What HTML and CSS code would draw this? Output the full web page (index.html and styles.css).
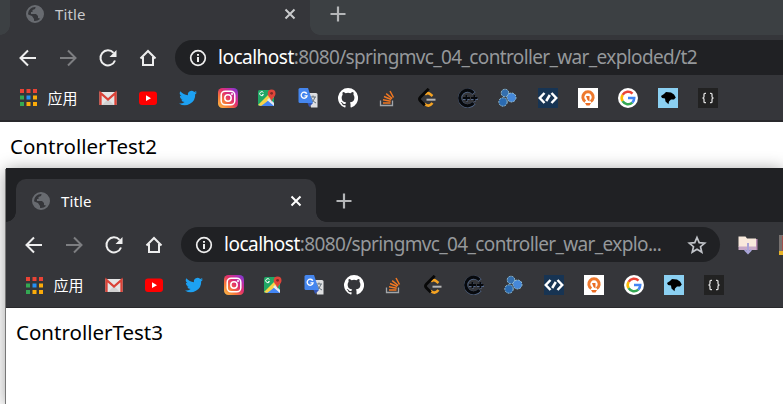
FILE: index.html
```
<!DOCTYPE html>
<html lang="zh">
<head>
<meta charset="utf-8">
<title>Title</title>
<link rel="stylesheet" href="styles.css">
</head>
<body>
<svg class="sprite" aria-hidden="true">
  <defs>
    <linearGradient id="insta-fill" x1="0" y1="1" x2="1" y2="0">
      <stop offset="0" stop-color="#fdc04a"/><stop offset=".3" stop-color="#f77a38"/><stop offset=".55" stop-color="#e1306c"/><stop offset=".8" stop-color="#b22fb4"/><stop offset="1" stop-color="#6440d8"/>
    </linearGradient>
  </defs>
  <symbol id="globe" viewBox="0 0 18 18"><circle cx="9" cy="9" r="8" fill="none" stroke="#686b70" stroke-width="2"/><path d="M10 1 9 4 6.500 5v2H5v2h5l2 2v2l3 1 2-4V6l-3-4ZM1 9l5 2 2 3v3l-4-2-3-4Z" fill="#686b70"/></symbol>
  <symbol id="back" viewBox="0 0 20 20"><path d="M18 10H3M10 2.500 2.500 10l7.500 7.500" fill="none" stroke="currentColor" stroke-width="2"/></symbol>
  <symbol id="reload" viewBox="0 0 20 20"><path d="M17 12.500A7.500 7.500 0 1 1 15.600 4.900" fill="none" stroke="currentColor" stroke-width="2"/><path d="M18.500 2v7h-7Z" fill="currentColor"/></symbol>
  <symbol id="home" viewBox="0 0 20 20"><path d="M2.500 10.500 10 3l7.500 7.500M5 9v8h10V9" fill="none" stroke="currentColor" stroke-width="2"/></symbol>
  <symbol id="info" viewBox="0 0 18 18"><circle cx="9" cy="9" r="7.300" fill="none" stroke="currentColor" stroke-width="1.700"/><path d="M9 8v5M9 5v1.800" stroke="currentColor" stroke-width="2"/></symbol>
  <symbol id="close" viewBox="0 0 12 12"><path d="m1.500 1.500 9 9m0-9-9 9" stroke="currentColor" stroke-width="2"/></symbol>
  <symbol id="plus" viewBox="0 0 16 16"><path d="M8 .5v15M.5 8h15" stroke="currentColor" stroke-width="2.200"/></symbol>
  <symbol id="star" viewBox="0 0 20 20"><path d="m10 2.500 2.200 5.100 5.500.5-4.200 3.600 1.300 5.400-4.800-2.900-4.800 2.900 1.300-5.400-4.200-3.600 5.500-.5Z" fill="none" stroke="#c1c4c9" stroke-width="1.700"/></symbol>
  <symbol id="folder" viewBox="0 0 20 20"><path d="M4 4h15.500v11H4Z" fill="#b98bb0"/><path d="M.5 1.500h7l1.500 2h9V12H.5Z" fill="#f9e9dc"/><path d="M.5 11.500h17.500V15H.5Z" fill="#c8a9c7"/><path d="M10 8v10M6.800 14.800 10 18l3.200-3.200" fill="none" stroke="#a9a4d8" stroke-width="2"/></symbol>
  <symbol id="edge" viewBox="0 0 10 20"><path d="M1 0h9v20H1Z" fill="#77716f"/><path d="M4 1h6v15H4Z" fill="#a0504b"/><path d="M1 16h9v4H1Z" fill="#e9b427"/></symbol>
  <symbol id="apps" viewBox="0 0 17 17"><path d="M0 0h4v4H0Zm6.500 0h4v4h-4ZM13 0h4v4h-4Z" fill="#ea4335"/><path d="M0 6.500h4v4H0ZM0 13h4v4H0Z" fill="#34a853"/><path d="M6.500 6.500h4v4h-4Z" fill="#2590f5"/><path d="M13 6.500h4v4h-4ZM6.500 13h4v4h-4Zm6.500 0h4v4h-4Z" fill="#fbab09"/></symbol>
  <symbol id="gmail" viewBox="0 0 20 20"><path d="M1.500 4h17v13h-17Z" fill="#e5e5e5"/><path d="m4 17 6-6 6 6Z" fill="#d1d1d1"/><path d="M2.500 17V5l7.500 6.500L17.500 5v12" fill="none" stroke="#da4237" stroke-width="2.300"/></symbol>
  <symbol id="youtube" viewBox="0 0 20 20"><rect x="1" y="3.500" width="18" height="13.500" rx="3" fill="#f00"/><path d="m8 7.300 5 2.900-5 2.900Z" fill="#fff"/></symbol>
  <symbol id="twitter" viewBox="2 2 20 20"><path fill="#1da1f2" d="M22 5.900a8 8 0 0 1-2.300.6 4 4 0 0 0 1.700-2.200 8 8 0 0 1-2.500 1A4 4 0 0 0 12 8.900 11.500 11.500 0 0 1 3.500 4.600a4 4 0 0 0 1.300 5.400A4 4 0 0 1 3 9.500a4 4 0 0 0 3.200 4 4 4 0 0 1-1.800.1A4 4 0 0 0 8.200 16.400 8.200 8.200 0 0 1 2 18.100 11.600 11.600 0 0 0 20 7.800 8 8 0 0 0 22 5.900Z" transform="translate(1.200 1.200) scale(.9)"/></symbol>
  <symbol id="instagram" viewBox="0 0 20 20"><rect width="20" height="20" rx="4.500" fill="url(#insta-fill)"/><rect x="3.200" y="3.200" width="13.600" height="13.600" rx="4" fill="none" stroke="#fff" stroke-width="1.500"/><circle cx="10" cy="10" r="3.200" fill="none" stroke="#fff" stroke-width="1.500"/><circle cx="14" cy="6" r="1" fill="#fff"/></symbol>
  <symbol id="maps" viewBox="0 0 20 20"><rect y="2" width="16" height="16" rx="1.500" fill="#20a765"/><path d="m1 18 8-8 7 8Z" fill="#4285f4"/><path d="m0 17 13-13 3 1v4L3 18Z" fill="#f7d348"/><path d="m4 18 8-7 4 4v3Z" fill="#4285f4"/><path d="m9 12 2-2 5 5v3Z" fill="#e6eaf0"/><path d="M13.500 14c0-4-3.800-5-3.800-8.500a3.900 3.900 0 0 1 7.800 0c0 3.500-4 4.500-4 8.500Z" fill="#df453a"/><circle cx="13.600" cy="5.300" r="1.400" fill="#812b26"/><path d="M5.500 4.700a2 2 0 1 0 0 2H4" fill="none" stroke="#fff"/></symbol>
  <symbol id="translate" viewBox="0 0 20 20"><path d="M9 5h9q1.500 0 1.500 1.500v13H13Z" fill="#dedfe1"/><path d="M12 9h6M15 7.500V9m2 0q-1 4-4 6m0-5q2 4 5 5" fill="none" stroke="#66727b"/><path d="M2 0h8l5 15H2Q.5 15 .5 13.500v-12Q.5 0 2 0Z" fill="#4586ee"/><path d="M8.800 5.800a3 3 0 1 0 .3 2H6.500" fill="none" stroke="#fff" stroke-width="1.300"/><path d="M9.500 15H15l-3.800 4Z" fill="#3454b4"/></symbol>
  <symbol id="github" viewBox="0 0 16 16"><path fill="#fff" d="M8 0a8 8 0 0 0-2.530 15.590c.4.070.55-.17.550-.38v-1.490c-2.010.37-2.530-.49-2.690-.94-.09-.23-.48-.94-.82-1.130-.28-.15-.68-.52-.01-.53.630-.01 1.080.58 1.230.820.720 1.210 1.870.870 2.330.660.070-.52.280-.87.510-1.070-1.780-.2-3.640-.89-3.640-3.950 0-.87.310-1.590.820-2.150-.08-.2-.36-1.020.080-2.120 0 0 .67-.21 2.200.820a7.600 7.600 0 0 1 4 0c1.530-1.040 2.200-.82 2.200-.82.440 1.100.160 1.920.080 2.120.510.560.820 1.270.820 2.150 0 3.070-1.870 3.750-3.650 3.950.290.250.540.730.540 1.480v2.200c0 .21.150.46.550.38A8 8 0 0 0 8 0Z"/></symbol>
  <symbol id="stack" viewBox="0 0 20 20"><path d="M2.500 12.500v5h12v-5" fill="none" stroke="#a1a5a9" stroke-width="1.300"/><path d="M5 15h7.500M5 11.800l7.700 1.400M6 8.500l7.300 3M8.200 5.700l6 4.800M12 3l3.500 6.500" stroke="#f27822" stroke-width="1.500"/></symbol>
  <symbol id="leetcode" viewBox="0 0 20 20"><path d="M7 6.500q2.500-2.500 5-.5l2.500 2M6.500 15.500q4 4.500 8-.5" fill="none" stroke="#f5a322" stroke-width="2.600"/><path d="M10.700.8 2.500 9q-2 2 0 4l4.300 4.300" fill="none" stroke="#080808" stroke-width="2.800"/><path d="M8.500 11.700h9" stroke="#b5b5b5" stroke-width="2"/></symbol>
  <symbol id="cplus" viewBox="0 0 20 20"><path d="M16 5.500A7.800 7.800 0 1 0 16 15" fill="none" stroke="#566b8c" stroke-width="4"/><path d="M15.500 5A7.800 7.800 0 1 0 15.500 15" fill="none" stroke="#07090d" stroke-width="3.200"/><path d="M5 11h6.500M9 7.500v6M13 11h7M17 7.500v6" stroke="#647ca5" stroke-width="1.500"/><path d="M5 10h7M8.500 7v6M13 10h6.500M16.500 7v6" stroke="#07090d" stroke-width="1.800"/></symbol>
  <symbol id="nodes" viewBox="0 0 20 20"><g stroke="#9ac4d7" stroke-width="1" stroke-dasharray="2 1"><circle cx="7" cy="5" r="3.800" fill="#346fae"/><circle cx="5" cy="14" r="4.200" fill="#2b6bb1"/><circle cx="13.500" cy="9.500" r="4.500" fill="#4688d8"/></g></symbol>
  <symbol id="code" viewBox="0 0 20 20"><path d="M0 0h20v20H0Z" fill="#173453"/><path d="M6.500 5 1.800 10l4.700 5M13.500 5l4.700 5-4.700 5M11.800 7 8.200 13" fill="none" stroke="#fff" stroke-width="2.500"/></symbol>
  <symbol id="orange" viewBox="0 0 20 20"><path d="M0 0h20v20H0Z" fill="#fff"/><path d="M7.300 13.500a5.200 5.200 0 1 1 5.400 0" fill="none" stroke="#ee792d" stroke-width="3"/><path d="M8 8h3.500v5.500L9.500 12ZM7 15h6l-1.500 2.500h-3Z" fill="#eb6c23"/></symbol>
  <symbol id="google" viewBox="0 0 20 20"><circle cx="10" cy="10" r="10" fill="#fff"/><g fill="none" stroke-width="2.600"><path d="M4.600 6.800A6.300 6.300 0 0 1 14.500 5.600" stroke="#ea4335"/><path d="M4.600 13.200a6.300 6.300 0 0 1 0-6.400" stroke="#fbbc05"/><path d="M14.300 14.600a6.300 6.300 0 0 1-9.700-1.400" stroke="#34a853"/><path d="M10 10h6.200a6.300 6.300 0 0 1-1.900 4.600" stroke="#4285f4"/></g></symbol>
  <symbol id="bird" viewBox="0 0 20 20"><path d="M0 0h20v20H0Z" fill="#8bd0f2"/><path d="m3 8 3-2 2-2 5 .5 3 2 1.800 3-1.800 2h-3l-2 2-.5 2.700-3-2.700-.5-3-3-.5Z" fill="#000"/></symbol>
  <symbol id="braces" viewBox="0 0 20 20"><path d="M0 0h20v20H0Z" fill="#222"/><path d="M8 5.300H7q-1 0-1 1v2.200q0 1.500-1.500 1.500Q6 10 6 11.500v2.200q0 1 1 1h1M12 5.300h1q1 0 1 1v2.200q0 1.500 1.500 1.500-1.500 0-1.500 1.500v2.200q0 1-1 1h-1" fill="none" stroke="#ddd" stroke-width="1.300"/></symbol>
</svg>

<main class="desktop">
  <section class="window window-back">
    <header class="tabstrip">
      <div class="tab"><svg class="favicon"><use href="#globe"/></svg><span class="tab-title">Title</span><svg class="close"><use href="#close"/></svg></div>
      <svg class="new-tab"><use href="#plus"/></svg>
    </header>
    <nav class="toolbar">
      <svg class="nav-icon"><use href="#back"/></svg><svg class="nav-icon forward"><use href="#back"/></svg><svg class="nav-icon"><use href="#reload"/></svg><svg class="nav-icon"><use href="#home"/></svg>
      <div class="address"><svg class="info"><use href="#info"/></svg><span class="url"><b>localhost</b>:8080/springmvc_04_controller_war_exploded/t2</span></div>
    </nav>
    <div class="bookmarks">
      <svg class="apps"><use href="#apps"/></svg><span class="apps-label">应用</span>
      <div class="links"><svg><use href="#gmail"/></svg><svg><use href="#youtube"/></svg><svg><use href="#twitter"/></svg><svg><use href="#instagram"/></svg><svg><use href="#maps"/></svg><svg><use href="#translate"/></svg><svg><use href="#github"/></svg><svg><use href="#stack"/></svg><svg><use href="#leetcode"/></svg><svg><use href="#cplus"/></svg><svg><use href="#nodes"/></svg><svg><use href="#code"/></svg><svg><use href="#orange"/></svg><svg><use href="#google"/></svg><svg><use href="#bird"/></svg><svg><use href="#braces"/></svg></div>
    </div>
    <p class="page">ControllerTest2</p>
  </section>

  <section class="window window-front">
    <header class="tabstrip">
      <div class="tab"><svg class="favicon"><use href="#globe"/></svg><span class="tab-title">Title</span><svg class="close"><use href="#close"/></svg></div>
      <svg class="new-tab"><use href="#plus"/></svg>
    </header>
    <nav class="toolbar">
      <svg class="nav-icon"><use href="#back"/></svg><svg class="nav-icon forward"><use href="#back"/></svg><svg class="nav-icon"><use href="#reload"/></svg><svg class="nav-icon"><use href="#home"/></svg>
      <div class="address"><svg class="info"><use href="#info"/></svg><span class="url"><b>localhost</b>:8080/springmvc_04_controller_war_explo...</span><svg class="star"><use href="#star"/></svg></div>
      <svg class="folder"><use href="#folder"/></svg><svg class="edge"><use href="#edge"/></svg>
    </nav>
    <div class="bookmarks">
      <svg class="apps"><use href="#apps"/></svg><span class="apps-label">应用</span>
      <div class="links"><svg><use href="#gmail"/></svg><svg><use href="#youtube"/></svg><svg><use href="#twitter"/></svg><svg><use href="#instagram"/></svg><svg><use href="#maps"/></svg><svg><use href="#translate"/></svg><svg><use href="#github"/></svg><svg><use href="#stack"/></svg><svg><use href="#leetcode"/></svg><svg><use href="#cplus"/></svg><svg><use href="#nodes"/></svg><svg><use href="#code"/></svg><svg><use href="#orange"/></svg><svg><use href="#google"/></svg><svg><use href="#bird"/></svg><svg><use href="#braces"/></svg></div>
    </div>
    <p class="page">ControllerTest3</p>
  </section>
</main>
</body>
</html>
```
FILE: styles.css
```
* { box-sizing: border-box; }
body { margin: 0; overflow: hidden; background: #fff; font-family: "Noto Sans", "Noto Sans CJK SC", sans-serif; }
svg { display: block; flex: none; }
.sprite { position: absolute; width: 0; height: 0; }
.desktop { position: relative; width: 783px; height: 404px; overflow: hidden; }
.window { background: #fff; }
.window-back { height: 404px; }
/* Overlapping window on the desktop. */
.window-front { position: absolute; left: 6px; top: 168px; width: 777px; height: 236px; box-shadow: -1px 1px 0 #777, 0 2px 16px rgba(0,0,0,.4); }
.tabstrip { display: flex; align-items: flex-end; height: 35px; padding-left: 10px; background: #3c4043; }
.window-front .tabstrip { height: 54px; background: #202124; }
.tab { position: relative; display: flex; align-items: center; width: 300px; height: 43px; padding: 0 14px 0 16px; border-radius: 10px 10px 0 0; background: #35363a; color: #c9cacc; }
.window-front .tab { color: #fff; }
.tab::before, .tab::after { content: ""; position: absolute; bottom: 0; width: 10px; height: 10px; }
.tab::before { right: 100%; background: radial-gradient(circle at 0 0, transparent 9.5px, #35363a 10px); }
.tab::after { left: 100%; background: radial-gradient(circle at 100% 0, transparent 9.5px, #35363a 10px); }
.favicon { width: 18px; height: 18px; }
.tab-title { margin-left: 11px; font-size: 15px; line-height: 20px; letter-spacing: .15px; }
.close { width: 12px; height: 12px; margin-left: auto; }
.new-tab { width: 16px; height: 16px; margin: 0 0 13px 19.5px; color: #b4b6b8; }
.toolbar { display: flex; align-items: center; height: 45px; padding-left: 17.5px; background: #35363a; color: #eee; }
.nav-icon { width: 20px; height: 20px; margin-right: 20px; }
.forward { color: #7d7e81; transform: scaleX(-1); }
.address { display: flex; align-items: center; width: 650px; height: 35px; margin-left: -2.5px; padding-left: 13.5px; border-radius: 18px; background: #202124; flex: none; }
.window-front .address { width: 539px; }
.info { width: 18px; height: 18px; }
.url { margin: 0 0 2px 11.5px; color: #95989b; font-size: 19px; line-height: 26px; letter-spacing: -.64px; white-space: nowrap; }
.url b { font-weight: 400; color: #fff; letter-spacing: -.5px; }
.star { width: 20px; height: 20px; margin: 0 13px 0 auto; }
.folder { width: 20px; height: 20px; margin-left: 18px; }
.edge { width: 10px; height: 20px; margin-left: 20px; }
.bookmarks { display: flex; align-items: center; height: 42px; padding: 0 0 5px 20px; border-bottom: 2px solid #29292c; background: #35363a; }
.window-front .bookmarks { height: 41px; padding-bottom: 4px; border-bottom-width: 1px; }
.apps { width: 17px; height: 17px; }
.apps-label { width: 50px; margin-left: 10.5px; color: #fff; font: 15px/20px "Noto Sans CJK SC", sans-serif; }
.links { display: flex; gap: 20px; margin-left: .5px; }
.links svg { width: 20px; height: 20px; }
.page { margin: 0; padding: 10px; font-size: 20.5px; line-height: 28px; color: #000; }
```
